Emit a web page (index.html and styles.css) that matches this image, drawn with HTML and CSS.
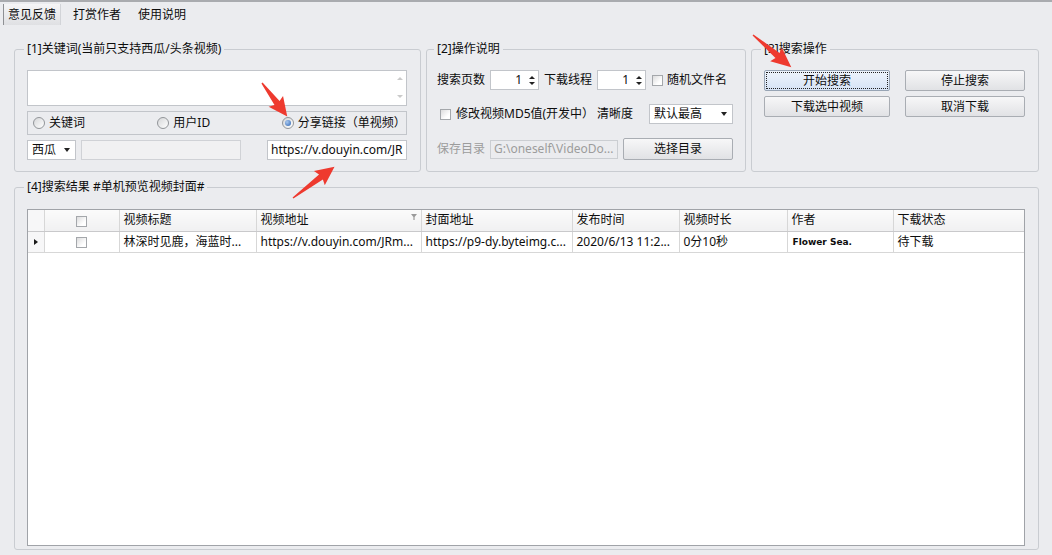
FILE: index.html
```html
<!DOCTYPE html>
<html lang="zh-CN">
<head>
  <meta charset="UTF-8">
  <title>视频下载</title>
  <link rel="stylesheet" href="styles.css">
</head>
<body>
  <div class="menubar">
    <span class="menu-item active">意见反馈</span>
    <span class="menu-item">打赏作者</span>
    <span class="menu-item">使用说明</span>
  </div>

  <div class="workspace">
    <div class="top-row">
      <fieldset class="group group-keyword">
        <legend>[1]关键词(当前只支持西瓜/头条视频)</legend>
        <div class="memo">
          <div class="memo-scroll">
            <span class="tri tri-up"></span>
            <span class="tri tri-down"></span>
          </div>
        </div>
        <div class="radio-panel">
          <label class="radio"><span class="radio-mark"></span>关键词</label>
          <label class="radio"><span class="radio-mark"></span>用户ID</label>
          <label class="radio"><span class="radio-mark checked"></span>分享链接（单视频）</label>
        </div>
        <div class="keyword-row">
          <div class="combo combo-site">西瓜<span class="caret"></span></div>
          <div class="textbox textbox-blank"></div>
          <div class="textbox textbox-url">https://v.douyin.com/JR</div>
        </div>
      </fieldset>

      <fieldset class="group group-options">
        <legend>[2]操作说明</legend>
        <div class="opt-row">
          <span>搜索页数</span>
          <div class="spin">1<span class="spin-arrows"><span class="tri tri-up dark"></span><span class="tri tri-down dark"></span></span></div>
          <span class="ml5">下载线程</span>
          <div class="spin">1<span class="spin-arrows"><span class="tri tri-up dark"></span><span class="tri tri-down dark"></span></span></div>
          <span class="check ml6"></span>
          <span class="ml4">随机文件名</span>
        </div>
        <div class="opt-row">
          <span class="check ml3"></span>
          <span class="ml5">修改视频MD5值(开发中）</span>
          <span class="ml3">清晰度</span>
          <div class="combo combo-quality">默认最高<span class="caret"></span></div>
        </div>
        <div class="opt-row opt-row-last">
          <span class="disabled">保存目录</span>
          <div class="textbox textbox-path">G:\oneself\VideoDo...</div>
          <button class="btn btn-dir">选择目录</button>
        </div>
      </fieldset>

      <fieldset class="group group-actions">
        <legend>[3]搜索操作</legend>
        <div class="action-grid">
          <button class="btn btn-focus">开始搜索</button>
          <button class="btn">停止搜索</button>
          <button class="btn">下载选中视频</button>
          <button class="btn">取消下载</button>
        </div>
      </fieldset>
    </div>

    <fieldset class="group group-results">
      <legend>[4]搜索结果 #单机预览视频封面#</legend>
      <div class="grid-box">
        <table class="result-table">
          <colgroup>
            <col style="width:16px">
            <col style="width:75px">
            <col style="width:137px">
            <col style="width:165px">
            <col style="width:151px">
            <col style="width:107px">
            <col style="width:108px">
            <col style="width:106px">
            <col>
          </colgroup>
          <thead>
            <tr>
              <th class="indicator"></th>
              <th class="center"><span class="check"></span></th>
              <th>视频标题</th>
              <th>视频地址<svg class="filter-icon" width="6" height="6" viewBox="0 0 6 6"><polygon points="0,0 6,0 3.6,3 3.6,6 2.4,6 2.4,3" fill="#9a9a9a"/></svg></th>
              <th>封面地址</th>
              <th>发布时间</th>
              <th>视频时长</th>
              <th>作者</th>
              <th>下载状态</th>
            </tr>
          </thead>
          <tbody>
            <tr>
              <td class="indicator"><span class="row-pointer"></span></td>
              <td class="center"><span class="check"></span></td>
              <td>林深时见鹿，海蓝时...</td>
              <td>https://v.douyin.com/JRm...</td>
              <td>https://p9-dy.byteimg.c...</td>
              <td>2020/6/13 11:2...</td>
              <td>0分10秒</td>
              <td class="author">Flower Sea.</td>
              <td>待下载</td>
            </tr>
          </tbody>
        </table>
      </div>
    </fieldset>
  </div>

  <!-- red annotation arrows drawn over the window -->
  <svg class="annotations" width="1052" height="555" viewBox="0 0 1052 555">
    <g fill="#ee3a2f">
      <g transform="translate(262 83) rotate(53)">
        <polygon points="0,-0.7 25,-3.2 23,-9 42,0 23,9 25,3.2 0,0.7"/>
      </g>
      <g transform="translate(293 198) rotate(-37)">
        <polygon points="0,-0.7 35,-3.2 33,-9 52,0 33,9 35,3.2 0,0.7"/>
      </g>
      <g transform="translate(753 35) rotate(40)">
        <polygon points="0,-0.7 32,-3.2 30,-9 50,0 30,9 32,3.2 0,0.7"/>
      </g>
    </g>
  </svg>
</body>
</html>
```

FILE: styles.css
```css
/* Window colours */
:root {
  --window-bg: #ebecef;
  --group-border: #c9ccd1;
  --field-border: #c2c5ca;
  --text: #0d0d0d;
  --text-disabled: #9c9c9c;
  --grid-line: #d7d7d7;
}

* {
  box-sizing: border-box;
}

body {
  margin: 0;
  width: 1052px;
  height: 555px;
  overflow: hidden;
  position: relative;
  display: flex;
  flex-direction: column;
  font-family: "Noto Sans", "Noto Sans CJK SC", sans-serif;
  font-size: 12px;
  line-height: 16px;
  color: var(--text);
  background: var(--window-bg);
}

/* Menu bar */
.menubar {
  display: flex;
  align-items: center;
  gap: 7px;
  height: 26px;
  padding-left: 3px;
  border-top: 2px solid #a9abaf;
}

.menu-item {
  padding: 3px 5px 2px;
}

.menu-item.active {
  padding: 3px 4px 2px;
  border-left: 1px solid #8e9094;
  border-right: 1px solid #d2d4d8;
  background: linear-gradient(#f6f6f7, #dfe0e3);
}

/* Work area */
.workspace {
  flex: 1;
  display: flex;
  flex-direction: column;
  gap: 7px;
  padding: 15px 13px 5px 14px;
}

.top-row {
  display: grid;
  grid-template-columns: 407px 320px 1fr;
  column-gap: 5px;
}

.group {
  margin: 0;
  min-width: 0;
  border: 1px solid var(--group-border);
  border-radius: 3px;
  padding: 13px 12px 11px 12px;
}

.group legend {
  padding: 0 3px;
  margin-left: -3px;
  line-height: 16px;
}

.group-keyword {
  padding-right: 13px;
}

.group-options {
  padding-left: 10px;
}

/* [1] keyword box */
.memo {
  height: 36px;
  display: flex;
  justify-content: flex-end;
  background: #fff;
  border: 1px solid var(--field-border);
}

.memo-scroll {
  width: 13px;
  display: flex;
  flex-direction: column;
  justify-content: space-between;
  align-items: center;
  padding: 6px 0 7px;
}

.tri {
  width: 0;
  height: 0;
  border-left: 3px solid transparent;
  border-right: 3px solid transparent;
}

.tri-up {
  border-bottom: 3px solid #cacaca;
}

.tri-down {
  border-top: 3px solid #cacaca;
}

.tri-up.dark {
  border-bottom-color: #222;
}

.tri-down.dark {
  border-top-color: #222;
}

.radio-panel {
  margin-top: 5px;
  height: 24px;
  display: grid;
  grid-template-columns: repeat(3, 1fr);
  align-items: center;
  padding-left: 5px;
  border: 1px solid var(--field-border);
}

.radio {
  display: flex;
  align-items: center;
  gap: 4px;
}

.radio-mark {
  width: 12px;
  height: 12px;
  border-radius: 50%;
  border: 1px solid #929599;
  background: linear-gradient(135deg, #d6d7d9, #ffffff);
  display: flex;
  align-items: center;
  justify-content: center;
}

.radio-mark.checked::after {
  content: "";
  width: 6px;
  height: 6px;
  border-radius: 50%;
  background: radial-gradient(circle at 35% 35%, #a9c8ee, #2d64b4);
}

.keyword-row {
  margin-top: 5px;
  height: 20px;
  display: flex;
}

.combo {
  display: flex;
  align-items: center;
  justify-content: space-between;
  padding: 0 5px 0 4px;
  background: #fff;
  border: 1px solid var(--field-border);
}

.caret {
  width: 0;
  height: 0;
  border-top: 4px solid #222;
  border-left: 3px solid transparent;
  border-right: 3px solid transparent;
}

.combo-site {
  width: 49px;
}

.textbox {
  height: 20px;
  padding: 0 3px;
  border: 1px solid var(--field-border);
  background: #fff;
  white-space: nowrap;
  overflow: hidden;
  display: flex;
  align-items: center;
}

.textbox-blank {
  width: 160px;
  margin-left: 5px;
  background: #f1f1f2;
  border-color: #d0d2d6;
}

.textbox-url {
  width: 140px;
  margin-left: auto;
}

/* [2] options */
.opt-row {
  display: flex;
  align-items: center;
  height: 20px;
  margin-bottom: 14px;
}

.opt-row-last {
  height: 22px;
  margin-bottom: 0;
}

.spin {
  width: 49px;
  height: 20px;
  margin-left: 5px;
  display: flex;
  align-items: center;
  justify-content: flex-end;
  padding-right: 3px;
  background: #fff;
  border: 1px solid var(--field-border);
}

.spin-arrows {
  display: flex;
  flex-direction: column;
  gap: 3px;
  margin-left: 7px;
}

.check {
  display: inline-block;
  width: 11px;
  height: 11px;
  border: 1px solid #a4a7ab;
  background: linear-gradient(135deg, #dcdcdd, #ffffff 70%);
  vertical-align: middle;
}

.ml3 { margin-left: 3px; }
.ml4 { margin-left: 4px; }
.ml5 { margin-left: 5px; }
.ml6 { margin-left: 6px; }

.combo-quality {
  width: 84px;
  height: 20px;
  margin-left: auto;
}

.disabled {
  color: var(--text-disabled);
}

.textbox-path {
  width: 128px;
  height: 19px;
  margin-left: 5px;
  background: transparent;
  border-color: #cbced2;
  color: var(--text-disabled);
}

/* Buttons */
.btn {
  font: inherit;
  color: var(--text);
  height: 21px;
  padding: 0;
  border: 1px solid #a9adb3;
  border-radius: 2px;
  background: linear-gradient(#f7f7f8, #e1e2e5);
}

.btn-dir {
  width: 110px;
  height: 22px;
  margin-left: auto;
}

.btn-focus {
  background: linear-gradient(#eef4fc, #d6e3f5);
  border-color: #97a4b4;
  outline: 1px dotted #222;
  outline-offset: -3px;
}

/* [3] actions */
.action-grid {
  display: grid;
  grid-template-columns: 126px 120px;
  column-gap: 15px;
  row-gap: 5px;
}

/* [4] results */
.group-results {
  flex: 1;
  padding: 14px 13px 3px 12px;
}

.grid-box {
  height: 337px;
  background: #fff;
  border: 1px solid #a0a3a8;
  overflow: hidden;
}

.result-table {
  width: 100%;
  border-collapse: collapse;
  table-layout: fixed;
}

.result-table th,
.result-table td {
  height: 21px;
  padding: 0 4px;
  font-weight: normal;
  text-align: left;
  white-space: nowrap;
  overflow: hidden;
  border-right: 1px solid var(--grid-line);
  border-bottom: 1px solid var(--grid-line);
}

.result-table th {
  background: linear-gradient(#fbfbfb, #f0f0f1);
  border-bottom-color: #c9c9cb;
}

.result-table th:last-child,
.result-table td:last-child {
  border-right: none;
}

.result-table .center {
  text-align: center;
}

.result-table .indicator {
  background: #f7f7f8;
  padding: 0;
}

.row-pointer {
  display: block;
  width: 0;
  height: 0;
  margin-left: 6px;
  border-left: 4px solid #1a1a1a;
  border-top: 3px solid transparent;
  border-bottom: 3px solid transparent;
}

.filter-icon {
  float: right;
  margin-top: 2px;
}

.result-table .author {
  padding-left: 5px;
  font-family: "DejaVu Sans", Verdana, sans-serif;
  font-size: 9px;
  font-weight: bold;
}

/* Annotation overlay */
.annotations {
  position: absolute;
  top: 0;
  left: 0;
  pointer-events: none;
}
```
